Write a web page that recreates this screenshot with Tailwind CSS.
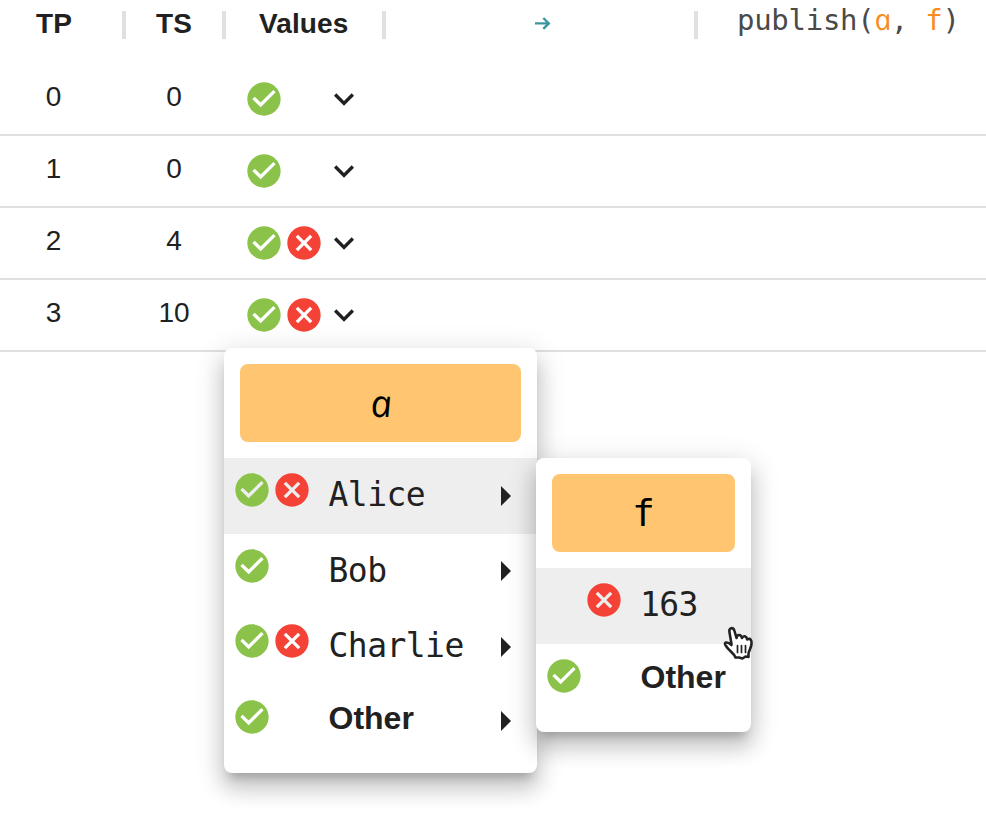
<!DOCTYPE html>
<html lang="en">
<head>
<meta charset="utf-8">
<title>Monitor table</title>
<script src="https://cdn.jsdelivr.net/npm/@tailwindcss/browser@4"></script>
</head>
<body class="relative w-[986px] h-[822px] overflow-hidden bg-white text-[#212121] font-['Liberation_Sans',Arial,sans-serif]">
<svg class="hidden">
  <symbol id="ok" viewBox="0 0 24 24"><path d="M12 2C6.48 2 2 6.48 2 12s4.48 10 10 10 10-4.48 10-10S17.52 2 12 2zm-2 15l-5-5 1.41-1.41L10 14.17l7.59-7.59L19 8l-9 9z"/></symbol>
  <symbol id="no" viewBox="0 0 24 24"><path d="M12 2C6.47 2 2 6.47 2 12s4.47 10 10 10 10-4.47 10-10S17.53 2 12 2zm5 13.59L15.59 17 12 13.41 8.41 17 7 15.59 10.59 12 7 8.41 8.41 7 12 10.59 15.59 7 17 8.41 13.41 12 17 15.59z"/></symbol>
  <symbol id="down" viewBox="0 0 24 24"><path d="M16.59 8.59L12 13.17 7.41 8.59 6 10l6 6 6-6z"/></symbol>
</svg>

<header class="flex h-16 text-[28px] leading-8 font-bold tracking-[0.2px]">
  <div class="w-[126px] flex justify-between pl-9 pt-[7px]"><span class="pt-px">TP</span><i class="w-1 h-7 mt-1 bg-[#e0e0e0]"></i></div>
  <div class="w-[100px] flex justify-between pl-[30px] pt-[7px]"><span class="pt-px">TS</span><i class="w-1 h-7 mt-1 bg-[#e0e0e0]"></i></div>
  <div class="w-40 flex justify-between pl-[33px] pt-[7px]"><span class="pt-px tracking-[0.1px]">Values</span><i class="w-1 h-7 mt-1 bg-[#e0e0e0]"></i></div>
  <div class="w-[312px] flex justify-between pl-[149px] pt-[7px]">
    <svg class="w-4 h-4 mt-2" viewBox="0 0 16 16" fill="none" stroke="#3b979f" stroke-width="2.4"><path d="M0 8.4h13.6M8.3 3l5.5 5.4-5.5 5.4"/></svg>
    <i class="w-1 h-7 mt-1 bg-[#e0e0e0]"></i>
  </div>
  <div class="pl-[39px] pt-[3px] font-normal text-[#4a4a4a] font-['DejaVu_Sans_Mono',monospace] text-[29px] tracking-[-0.28px] whitespace-pre">publish(<span class="inline-block -skew-x-[-12deg] italic text-[#f78c1f] font-['Open_Sans',sans-serif] text-[29.5px]">a</span>, <span class="text-[#f78c1f]">f</span>)</div>
</header>

<main class="text-[28px]">
  <div class="flex h-[72px] border-b-2 border-[#e0e0e0] leading-[66px] text-center"><span class="w-[107px]">0</span><span class="w-[134px]">0</span><span class="flex pl-[3px] pt-[15px]"><svg class="size-10 fill-[#8bc34a]"><use href="#ok"/></svg><b class="size-10"></b><svg class="size-10 fill-[#212121]"><use href="#down"/></svg></span></div>
  <div class="flex h-[72px] border-b-2 border-[#e0e0e0] leading-[66px] text-center"><span class="w-[107px]">1</span><span class="w-[134px]">0</span><span class="flex pl-[3px] pt-[15px]"><svg class="size-10 fill-[#8bc34a]"><use href="#ok"/></svg><b class="size-10"></b><svg class="size-10 fill-[#212121]"><use href="#down"/></svg></span></div>
  <div class="flex h-[72px] border-b-2 border-[#e0e0e0] leading-[66px] text-center"><span class="w-[107px]">2</span><span class="w-[134px]">4</span><span class="flex pl-[3px] pt-[15px]"><svg class="size-10 fill-[#8bc34a]"><use href="#ok"/></svg><svg class="size-10 fill-[#f44336]"><use href="#no"/></svg><svg class="size-10 fill-[#212121]"><use href="#down"/></svg></span></div>
  <div class="flex h-[72px] border-b-2 border-[#e0e0e0] leading-[66px] text-center"><span class="w-[107px]">3</span><span class="w-[134px]">10</span><span class="flex pl-[3px] pt-[15px]"><svg class="size-10 fill-[#8bc34a]"><use href="#ok"/></svg><svg class="size-10 fill-[#f44336]"><use href="#no"/></svg><svg class="size-10 fill-[#212121]"><use href="#down"/></svg></span></div>
</main>

<section class="absolute left-[224px] top-[348px] w-[313px] h-[425px] pt-4 rounded-lg bg-white shadow-[0_10px_10px_-6px_rgba(0,0,0,0.2),0_16px_20px_2px_rgba(0,0,0,0.14),0_6px_28px_4px_rgba(0,0,0,0.12)]">
  <div class="mx-4 mb-4 h-[78px] rounded-lg bg-[#ffc570] text-black text-center leading-[76px] text-[36px]"><span class="inline-block -skew-x-[-7deg] italic font-['Open_Sans',sans-serif] text-[38px]">a</span></div>
  <div class="flex h-[76px] pl-2 pt-3 bg-[#eee]"><svg class="size-10 fill-[#8bc34a]"><use href="#ok"/></svg><svg class="size-10 fill-[#f44336]"><use href="#no"/></svg><span class="w-[189px] pl-[16.5px] pt-[5px] font-['DejaVu_Sans_Mono',monospace] text-[33px] leading-10 tracking-[-0.55px]">Alice</span><svg class="w-[10px] h-5 mt-4 fill-[#212121]" viewBox="0 0 10 20"><path d="M0 0l10 10L0 20z"/></svg></div>
  <div class="flex h-[75px] pl-2 pt-3"><svg class="size-10 fill-[#8bc34a]"><use href="#ok"/></svg><b class="size-10"></b><span class="w-[189px] pl-[16.5px] pt-[5px] font-['DejaVu_Sans_Mono',monospace] text-[33px] leading-10 tracking-[-0.55px]">Bob</span><svg class="w-[10px] h-5 mt-[15px] fill-[#212121]" viewBox="0 0 10 20"><path d="M0 0l10 10L0 20z"/></svg></div>
  <div class="flex h-[76px] pl-2 pt-3"><svg class="size-10 fill-[#8bc34a]"><use href="#ok"/></svg><svg class="size-10 fill-[#f44336]"><use href="#no"/></svg><span class="w-[189px] pl-[16.5px] pt-[5px] font-['DejaVu_Sans_Mono',monospace] text-[33px] leading-10 tracking-[-0.55px]">Charlie</span><svg class="w-[10px] h-5 mt-4 fill-[#212121]" viewBox="0 0 10 20"><path d="M0 0l10 10L0 20z"/></svg></div>
  <div class="flex h-[76px] pl-2 pt-3"><svg class="size-10 fill-[#8bc34a]"><use href="#ok"/></svg><b class="size-10"></b><span class="w-[189px] pl-[16.5px] pt-px text-[32px] leading-10 font-bold">Other</span><svg class="w-[10px] h-5 mt-[14px] fill-[#212121]" viewBox="0 0 10 20"><path d="M0 0l10 10L0 20z"/></svg></div>
</section>

<section class="absolute left-[536px] top-[458px] w-[215px] h-[274px] pt-4 rounded-lg bg-white shadow-[0_10px_10px_-6px_rgba(0,0,0,0.2),0_16px_20px_2px_rgba(0,0,0,0.14),0_6px_28px_4px_rgba(0,0,0,0.12)]">
  <div class="mx-4 mb-4 h-[78px] rounded-lg bg-[#ffc570] text-black text-center leading-[78px] text-[38px] font-['DejaVu_Sans_Mono',monospace]">f</div>
  <div class="flex h-[76px] pl-2 pt-3 bg-[#eee]"><b class="size-10"></b><svg class="size-10 fill-[#f44336]"><use href="#no"/></svg><span class="pl-4 pt-[5px] font-['DejaVu_Sans_Mono',monospace] text-[33px] leading-10 tracking-[-0.6px]">163</span></div>
  <div class="flex h-[76px] pl-2 pt-3"><svg class="size-10 fill-[#8bc34a]"><use href="#ok"/></svg><b class="size-10"></b><span class="pl-[16.5px] pt-px text-[32px] leading-10 font-bold">Other</span></div>
</section>

<svg class="absolute left-[720px] top-[624px] w-9 h-10" viewBox="0 0 36 40" fill="#fff" stroke="#222" stroke-width="2.6" stroke-linejoin="round" stroke-linecap="round">
  <path d="M11.500 20L9.500 8.500C8.500 3.500 13.500 2.500 14.500 7L16.500 14C17 10 21 10 22 14C23.500 11 26.500 12 27.200 15.500C30.500 13.500 32 16.500 31.500 20C31 25 28.500 27 28.500 30V33L25.500 32.500L22.500 34.500L19 33.500H15.500C14 29 9 27 6 22C3 18 7 17 11.500 21"/>
  <path d="M17.500 21.500v7M21.500 21.500v7M25.500 21.500v7" stroke-width="1.700"/>
</svg>
</body>
</html>
